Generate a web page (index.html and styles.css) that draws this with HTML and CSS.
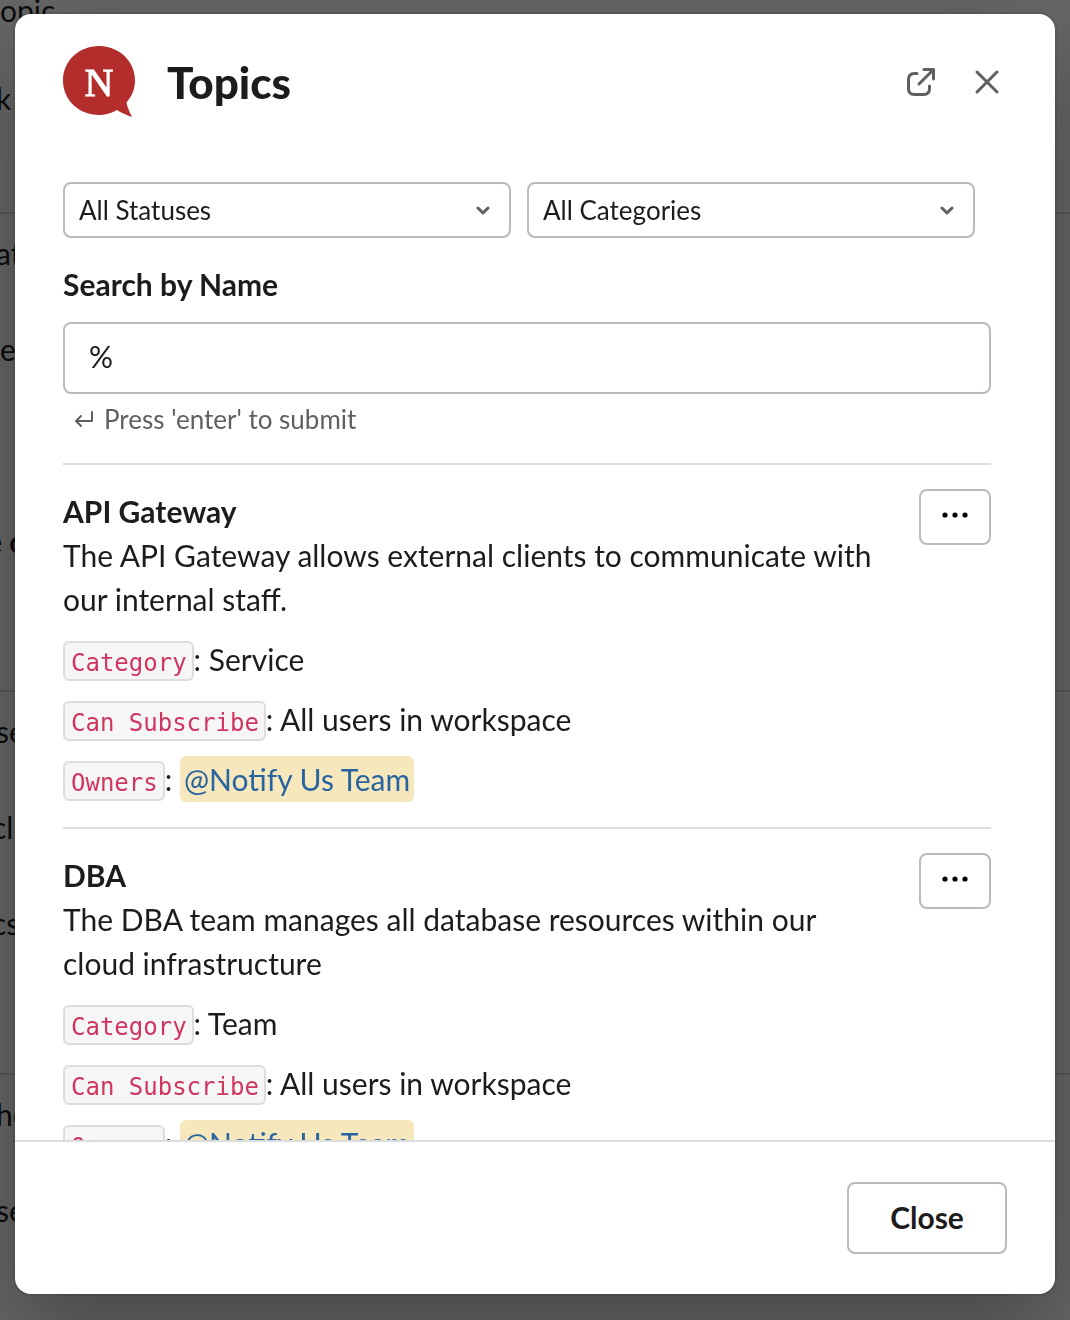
FILE: index.html
```html
<!DOCTYPE html>
<html lang="en">
<head>
<meta charset="utf-8">
<meta name="viewport" content="width=device-width, initial-scale=1">
<title>Topics</title>
<link rel="stylesheet" href="styles.css">
</head>
<body>
<div class="backdrop-page" aria-hidden="true">
  <div class="feed feed-first"><p>opic</p><p class="cut">k</p></div>
  <div class="feed"><p class="cut">at</p><p>e</p><p>&nbsp;</p><p class="strong cut-more">e c</p></div>
  <div class="feed"><p class="cut">se</p><p class="cut-half">clu</p><p class="cut-half">cs</p></div>
  <div class="feed"><p class="cut">ho</p><p class="cut">se</p></div>
</div>
<div class="overlay">
  <div class="modal" role="dialog" aria-labelledby="modal-title">
    <header class="modal-header">
      <svg class="logo" viewBox="0 0 72 72" aria-hidden="true">
        <path fill="#b22d2b" d="M36 0C56 0 72 15 72 34.500C72 43 69 50 63.500 56.500C64 60 66 65 69 71C63 69 57 66 54 64C48 67.500 42 69 36 69C16 69 0 54 0 34.500C0 15 16 0 36 0Z"/>
        <text x="36" y="50" text-anchor="middle" class="logo-letter">N</text>
      </svg>
      <h1 id="modal-title">Topics</h1>
      <button class="icon-button" type="button" aria-label="Open in new window">
        <svg viewBox="0 0 36 36"><path d="M14 9.500H11.500Q5.500 9.500 5.500 15.500V24.500Q5.500 30.500 11.500 30.500H20.500Q26.500 30.500 26.500 24.500V22M16 20L30.500 5.500M21 5.500H30.500V15"/></svg>
      </button>
      <button class="icon-button" type="button" aria-label="Close dialog">
        <svg viewBox="0 0 36 36"><path d="M8 8L28 28M28 8L8 28"/></svg>
      </button>
    </header>
    <main class="modal-body">
      <div class="filters">
        <div class="select-box">
          <select aria-label="Status"><option>All Statuses</option></select>
          <svg viewBox="0 0 16 10" aria-hidden="true"><path d="M3 3L8 8L13 3"/></svg>
        </div>
        <div class="select-box">
          <select aria-label="Category"><option>All Categories</option></select>
          <svg viewBox="0 0 16 10" aria-hidden="true"><path d="M3 3L8 8L13 3"/></svg>
        </div>
      </div>
      <label class="search-label" for="search">Search by Name</label>
      <input class="search" id="search" type="text" value="%">
      <p class="hint">
        <svg viewBox="0 0 20 16" aria-hidden="true"><path d="M18 1V10H2M7 5L2 10L7 15"/></svg>
        <span>Press 'enter' to submit</span>
      </p>
      <section class="topic">
        <div class="topic-text">
          <h2>API Gateway</h2>
          <p>The API Gateway allows external clients to communicate with our internal staff.</p>
          <p class="field"><code>Category</code>: Service</p>
          <p class="field"><code>Can Subscribe</code>: All users in workspace</p>
          <p class="field"><code>Owners</code>: <a class="mention" href="#team">@Notify Us Team</a></p>
        </div>
        <button class="more" type="button" aria-label="API Gateway actions">
          <svg viewBox="0 0 26 6"><circle cx="3" cy="3" r="2.600"/><circle cx="13" cy="3" r="2.600"/><circle cx="23" cy="3" r="2.600"/></svg>
        </button>
      </section>
      <section class="topic">
        <div class="topic-text">
          <h2>DBA</h2>
          <p>The DBA team manages all database resources within our cloud infrastructure</p>
          <p class="field"><code>Category</code>: Team</p>
          <p class="field"><code>Can Subscribe</code>: All users in workspace</p>
          <p class="field"><code>Owners</code>: <a class="mention" href="#team">@Notify Us Team</a></p>
        </div>
        <button class="more" type="button" aria-label="DBA actions">
          <svg viewBox="0 0 26 6"><circle cx="3" cy="3" r="2.600"/><circle cx="13" cy="3" r="2.600"/><circle cx="23" cy="3" r="2.600"/></svg>
        </button>
      </section>
    </main>
    <footer class="modal-footer">
      <button class="close" type="button">Close</button>
    </footer>
  </div>
</div>
</body>
</html>
```
FILE: styles.css
```css
* {
  box-sizing: border-box;
}

body {
  margin: 0;
  height: 100vh;
  overflow: hidden;
  background: #fff;
  color: #1d1c1d;
  font-family: Lato, sans-serif;
  font-size: 30px;
  line-height: 44px;
}

h1, h2, p {
  margin: 0;
}

button, select, input {
  color: inherit;
  font: inherit;
}

/* Page behind the dialog */
.backdrop-page {
  height: 100vh;
  overflow: hidden;
}

.feed {
  display: flex;
  flex-direction: column;
  gap: 48px;
  height: 383px;
  padding-top: 15px;
  border-bottom: 2px solid #ddd;
  line-height: 48px;
  white-space: nowrap;
}

.feed-first {
  gap: 40px;
  height: 243px;
  margin-top: -29px;
}

.feed-first + .feed {
  height: 478px;
}

.strong {
  font-weight: 700;
}

.cut {
  margin-left: -4px;
}

.cut-half {
  margin-left: -8px;
}

.cut-more {
  margin-left: -14px;
}

.overlay {
  position: fixed;
  inset: 0;
  display: flex;
  justify-content: center;
  padding: 14px 15px 26px;
  background: rgba(0, 0, 0, 0.6);
}

.modal {
  display: flex;
  flex: 1;
  flex-direction: column;
  overflow: hidden;
  border-radius: 16px;
  background: #fff;
  box-shadow: 0 0 0 2px rgba(29, 28, 29, 0.13), 0 36px 96px rgba(0, 0, 0, 0.32);
}

.modal-header {
  display: flex;
  align-items: center;
  gap: 30px;
  padding: 32px 50px 32px 48px;
}

.modal-header h1 {
  flex: 1;
  padding-left: 2px;
  font-size: 44px;
  font-weight: 900;
  line-height: 72px;
}

.logo {
  width: 72px;
  height: 72px;
}

.logo-letter {
  fill: #fff;
  stroke: #fff;
  font: 40px "Liberation Serif", serif;
}

.icon-button {
  display: flex;
  padding: 0;
  border: 0;
  background: none;
}

.icon-button svg {
  width: 36px;
  height: 36px;
}

.icon-button path,
.select-box path,
.hint path {
  fill: none;
  stroke: #616061;
  stroke-linecap: round;
  stroke-linejoin: round;
  stroke-width: 3px;
}

.modal-body {
  flex: 1;
  overflow-y: auto;
  scrollbar-width: none;
  padding: 32px 64px 0 48px;
}

.filters {
  display: flex;
  gap: 16px;
  padding-right: 16px;
}

.select-box {
  display: grid;
  flex: 1;
  align-items: center;
}

.select-box select,
.select-box svg {
  grid-area: 1 / 1;
}

.select-box select {
  height: 56px;
  padding: 0 48px 0 14px;
  border: 2px solid #bbb;
  border-radius: 8px;
  appearance: none;
  background: #fff;
  font-size: 26px;
}

.select-box svg {
  justify-self: end;
  width: 16px;
  height: 10px;
  margin-right: 20px;
  pointer-events: none;
}

.search-label {
  display: block;
  margin: 24px 0 16px;
  font-weight: 700;
}

.search {
  display: block;
  width: 100%;
  height: 72px;
  padding: 0 24px 4px;
  border: 2px solid #bbb;
  border-radius: 8px;
}

.hint {
  display: flex;
  align-items: center;
  gap: 10px;
  padding: 7px 0 26px 11px;
  color: #616061;
  font-size: 26px;
  line-height: 36px;
}

.hint svg {
  width: 20px;
  height: 16px;
}

.hint path {
  stroke-width: 2px;
}

.topic {
  display: flex;
  align-items: flex-start;
  gap: 32px;
  padding: 24px 0;
  border-top: 2px solid #ddd;
}

.topic-text {
  flex: 1;
  padding-bottom: 2px;
}

.topic h2 {
  font-size: 30px;
  font-weight: 700;
}

.field {
  margin-top: 16px;
}

.field code {
  padding: 6px 5px 2px 6px;
  border: 2px solid #ddd;
  border-radius: 6px;
  background: #f6f6f6;
  color: #d0355f;
  font-family: "DejaVu Sans Mono", monospace;
  font-size: 24px;
  line-height: 24px;
}

.mention {
  padding: 5px 4px;
  border-radius: 6px;
  background: #f6e8bc;
  color: #2a64a0;
  text-decoration: none;
}

.more,
.close {
  border: 2px solid #bbb;
  border-radius: 8px;
  background: #fff;
}

.more {
  display: flex;
  justify-content: center;
  width: 72px;
  height: 56px;
  padding: 21px 0;
}

.more svg {
  width: 26px;
  height: 6px;
}

.close {
  height: 72px;
  min-width: 160px;
  padding-bottom: 3px;
  font-weight: 700;
}

.modal-footer {
  display: flex;
  justify-content: flex-end;
  padding: 40px 48px;
  border-top: 2px solid #ddd;
}
```
